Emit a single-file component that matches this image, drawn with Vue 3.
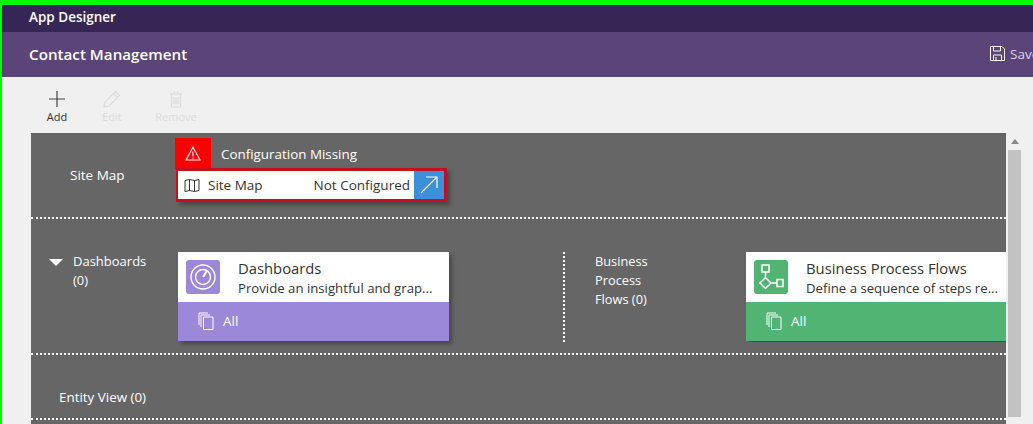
<script setup>
const cards = [
  { key: 'd', title: 'Dashboards', desc: 'Provide an insightful and grap...', tone: 'purple' },
  { key: 'b', title: 'Business Process Flows', desc: 'Define a sequence of steps re...', tone: 'green' }
]
</script>

<template>
  <div class="app">
    <div class="top">App Designer</div>
    <header class="head">
      <span class="head-title">Contact Management</span>
      <span class="save">
        <svg class="save-icon" width="15" height="15" viewBox="0 0 15 15" fill="none" stroke="#fff" stroke-width="1">
          <path d="M.5.5h11.5l2.500 2.500v11.500H.5z" />
          <path d="M3.500.5v4.500h7V.5M3.500 14.500V9h8v5.500M6 14.500V11" />
        </svg>
        <span>Save</span>
      </span>
    </header>
    <nav class="tools">
      <div class="tool">
        <svg width="18" height="18" viewBox="0 0 18 18" stroke="#444" stroke-width="1.2"><path d="M9 1v16M1 9h16" /></svg>
        <span>Add</span>
      </div>
      <div class="tool off edit">
        <svg width="18" height="18" viewBox="0 0 18 18" fill="none" stroke="#dcdcdc" stroke-width="1.2"><path d="M12.500 1.500l4 4L6 16l-5 1 1-5z" /><path d="M10.500 3.500l4 4" /></svg>
        <span>Edit</span>
      </div>
      <div class="tool off remove">
        <svg width="18" height="18" viewBox="0 0 18 18" fill="none" stroke="#dcdcdc" stroke-width="1.2"><path d="M3 4h12M7 4V2h4v2M4.500 4v13h9V4M7 7v7M9 7v7M11 7v7" /></svg>
        <span>Remove</span>
      </div>
    </nav>
    <div class="work">
      <main class="canvas">
        <section class="row row-map">
          <div class="map-label">Site Map</div>
          <div class="map">
            <div class="map-top">
              <span class="warn">
                <svg width="16" height="15" viewBox="0 0 16 15" fill="none" stroke="#fff" stroke-width="1.1"><path d="M8 1.200L15 14H1z" /><path d="M8 5.500v5M8 11.500v1.200" /></svg>
              </span>
              <span class="warn-text">Configuration Missing</span>
            </div>
            <div class="map-box">
              <svg class="map-icon" width="16" height="13" viewBox="0 0 16 13" fill="none" stroke="#333" stroke-width="1"><path d="M1 1.500l4.500-1 5 1 4.500-1v11l-4.500 1-5-1-4.500 1zM5.500.5v11M10.500 1.500v11" /></svg>
              <span class="map-name">Site Map</span>
              <span class="map-state">Not Configured</span>
              <span class="go">
                <svg width="20" height="20" viewBox="0 0 20 20" fill="none" stroke="#fff" stroke-width="1.2"><path d="M2 18L18 2M7 2h11v11" /></svg>
              </span>
            </div>
          </div>
        </section>
        <section class="row row-dash">
          <div class="col col-left">
            <div class="dash-label">
              <span class="tri"></span>
              <span>Dashboards<br />(0)</span>
            </div>
            <article class="card" :class="cards[0].tone">
              <div class="card-main">
                <span class="badge">
                  <svg width="26" height="26" viewBox="0 0 26 26" fill="none" stroke="#fff" stroke-width="1.4">
                    <circle cx="13" cy="13" r="12" />
                    <circle cx="13" cy="13" r="7.500" />
                    <path d="M13 13l4.500-7" stroke-width="2" />
                  </svg>
                </span>
                <div class="card-text">
                  <div class="card-title">{{ cards[0].title }}</div>
                  <div class="card-desc">{{ cards[0].desc }}</div>
                </div>
              </div>
              <div class="card-foot">
                <svg width="16" height="18" viewBox="0 0 16 18" fill="none" stroke="#fff" stroke-width="1"><path d="M1 13V1h9M3 15V3h9M5.500 17.500v-12.500h9.500v12.500z" /></svg>
                <span>All</span>
              </div>
            </article>
          </div>
          <div class="col col-right">
            <div class="bpf-label">Business<br />Process<br />Flows (0)</div>
            <article class="card" :class="cards[1].tone">
              <div class="card-main">
                <span class="badge">
                  <svg width="26" height="26" viewBox="0 0 26 26" fill="none" stroke="#fff" stroke-width="1.5">
                    <path d="M4 1h7v7H4zM7.500 8v5M2 19l5.500-5.500L13 19l-5.500 5.500zM13 19h6M19 15.500h6v7h-6z" />
                  </svg>
                </span>
                <div class="card-text">
                  <div class="card-title">{{ cards[1].title }}</div>
                  <div class="card-desc">{{ cards[1].desc }}</div>
                </div>
              </div>
              <div class="card-foot">
                <svg width="16" height="18" viewBox="0 0 16 18" fill="none" stroke="#fff" stroke-width="1"><path d="M1 13V1h9M3 15V3h9M5.500 17.500v-12.500h9.500v12.500z" /></svg>
                <span>All</span>
              </div>
            </article>
          </div>
        </section>
        <section class="row row-entity">Entity View (0)</section>
      </main>
      <div class="scroll">
        <span class="arrow"></span>
        <span class="thumb"></span>
      </div>
    </div>
  </div>
</template>

<style scoped>
.app {
  width: 1033px;
  height: 424px;
  overflow: hidden;
  box-sizing: border-box;
  border-top: 5px solid #00ff00;
  border-left: 2px solid #00ff00;
  background: #f0f0f0;
  font-family: "Open Sans", "Noto Sans", sans-serif;
  color: #333;
  display: flex;
  flex-direction: column;
}
.top {
  height: 27px;
  flex: none;
  box-sizing: border-box;
  padding: 4px 0 0 27px;
  background: #362656;
  color: #fff;
  font-size: 13.500px;
  font-weight: 600;
  line-height: 17px;
}
.head {
  height: 45px;
  flex: none;
  display: flex;
  align-items: center;
  justify-content: space-between;
  padding-left: 27px;
  padding-bottom: 2px;
  box-sizing: border-box;
  background: #5b4478;
  color: #fff;
}
.head-title {
  font-size: 15.200px;
  font-weight: 600;
}
.save {
  display: flex;
  align-items: center;
  gap: 5px;
  width: 43px;
  overflow: hidden;
  flex: none;
  font-size: 13.500px;
  color: #ddd6e6;
}
.save-icon {
  flex: none;
}
.tools {
  height: 56px;
  flex: none;
  display: flex;
  box-sizing: border-box;
  padding: 13px 0 0 29px;
}
.tool {
  display: flex;
  flex-direction: column;
  align-items: center;
  width: 52px;
  font-size: 11px;
  line-height: 14px;
  gap: 2px;
  color: #333;
}
.off { color: #dcdcdc; }
.edit { margin-left: 3px; }
.remove { margin-left: 12px; }
.work {
  flex: 1;
  min-height: 0;
  display: flex;
  padding-left: 29px;
}
.canvas {
  width: 975px;
  flex: none;
  background: #666;
  color: #fff;
  font-size: 13.400px;
}
.row {
  box-sizing: border-box;
  border-bottom: 2px dotted #fff;
}
.row-map {
  height: 86px;
  display: flex;
}
.map-label {
  width: 144px;
  flex: none;
  padding: 33px 0 0 39px;
  box-sizing: border-box;
  line-height: 18px;
  font-size: 13.500px;
}
.map {
  width: 272px;
  padding-top: 5px;
}
.map-top {
  display: flex;
  align-items: center;
  height: 31px;
  margin-bottom: -1px;
}
.warn {
  width: 36px;
  height: 31px;
  background: #f00;
  display: flex;
  align-items: center;
  justify-content: center;
  flex: none;
}
.warn-text {
  margin-left: 10px;
  font-size: 13.400px;
}
.map-box {
  position: relative;
  height: 34px;
  margin-left: 1px;
  box-sizing: border-box;
  border: 3px solid #c50f1f;
  border-left-width: 2px;
  background: #fff;
  color: #333;
  display: flex;
  align-items: center;
  box-shadow: 3px 3px 4px rgba(0, 0, 0, 0.3);
}
.map-icon {
  margin-left: 6px;
  flex: none;
}
.map-name {
  margin-left: 8px;
  font-size: 13.500px;
}
.map-state {
  margin-left: auto;
  margin-right: 4px;
  font-size: 13.500px;
}
.go {
  width: 30px;
  height: 28px;
  background: #3c8fd9;
  display: flex;
  align-items: center;
  justify-content: center;
  flex: none;
}
.row-dash {
  height: 136px;
  display: flex;
  padding-top: 33px;
}
.col {
  height: 90px;
  display: flex;
}
.col-left {
  width: 532px;
  flex: none;
  border-right: 2px dotted #fff;
}
.col-right {
  flex: 1;
  min-width: 0;
  overflow: hidden;
  font-size: 12.800px;
}
.dash-label {
  width: 147px;
  flex: none;
  display: flex;
  align-items: flex-start;
  padding-left: 18px;
  box-sizing: border-box;
  line-height: 19px;
  font-size: 13px;
}
.tri {
  width: 0;
  height: 0;
  margin: 7px 10px 0 0;
  border-left: 7.500px solid transparent;
  border-right: 7.500px solid transparent;
  border-top: 7px solid #fff;
  flex: none;
}
.bpf-label {
  width: 181px;
  flex: none;
  padding-left: 30px;
  box-sizing: border-box;
  line-height: 19px;
}
.card {
  width: 271px;
  height: 89px;
  flex: none;
  display: flex;
  flex-direction: column;
  box-shadow: 3px 3px 4px rgba(0, 0, 0, 0.3);
}
.card-main {
  height: 50px;
  flex: none;
  display: flex;
  padding: 8px 0 0 8px;
  box-sizing: border-box;
  background: #fff;
  color: #333;
}
.badge {
  width: 34px;
  height: 34px;
  border-radius: 3px;
  display: flex;
  align-items: center;
  justify-content: center;
  flex: none;
}
.card-text {
  margin: -2px 0 0 18px;
  min-width: 0;
}
.card-title {
  font-size: 14.800px;
  line-height: 21px;
}
.card-desc {
  font-size: 13.200px;
  line-height: 19px;
  white-space: nowrap;
}
.card-foot {
  flex: 1;
  display: flex;
  align-items: center;
  gap: 9px;
  padding: 0 0 2px 20px;
  font-size: 13.500px;
}
.purple .badge, .purple .card-foot { background: #9b88d9; }
.green .badge, .green .card-foot { background: #52b473; }
.row-entity {
  height: 65px;
  padding: 33px 0 0 28px;
  line-height: 18px;
}
.scroll {
  width: 13px;
  flex: none;
  margin-left: 2px;
  padding-bottom: 7px;
  display: flex;
  flex-direction: column;
  align-items: center;
}
.arrow {
  width: 0;
  height: 0;
  margin-top: 6px;
  border-left: 4px solid transparent;
  border-right: 4px solid transparent;
  border-bottom: 5px solid #888;
}
.thumb {
  width: 13px;
  flex: 1;
  margin-top: 6px;
  background: #c2c2c2;
}
</style>
